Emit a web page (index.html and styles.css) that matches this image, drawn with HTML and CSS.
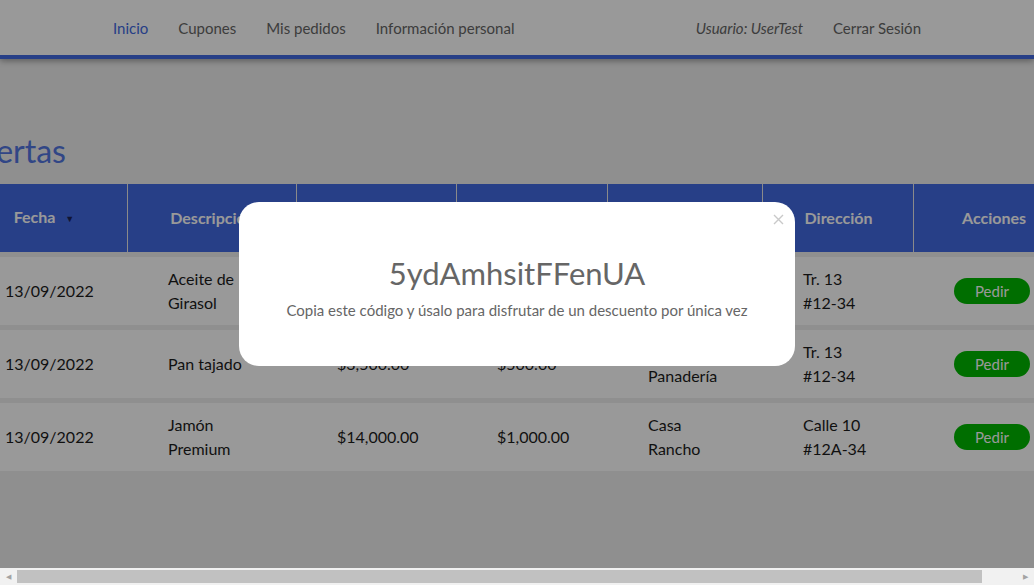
FILE: index.html
```html
<!DOCTYPE html>
<html lang="es">
<head>
    <meta charset="UTF-8">
    <meta name="viewport" content="width=device-width, initial-scale=1.0">
    <title>Ofertas</title>
    <link rel="stylesheet" href="styles.css">
</head>
<body>
    <nav class="navbar">
        <div class="nav-inner">
            <ul class="nav-links">
                <li><a href="#" class="active">Inicio</a></li>
                <li><a href="#">Cupones</a></li>
                <li><a href="#">Mis pedidos</a></li>
                <li><a href="#">Información personal</a></li>
            </ul>
            <ul class="nav-links">
                <li><span class="user">Usuario: UserTest</span></li>
                <li><a href="#">Cerrar Sesión</a></li>
            </ul>
        </div>
    </nav>

    <main class="page">
        <div class="content">
            <h1>Ofertas</h1>
            <table class="offers">
                <thead>
                    <tr>
                        <th class="col-date">Fecha <span class="sort">&#9660;</span></th>
                        <th class="col-desc">Descripción</th>
                        <th class="col-price">Precio</th>
                        <th class="col-ship">Costo de<br>envío</th>
                        <th class="col-prov">Proveedor</th>
                        <th class="col-addr">Dirección</th>
                        <th class="col-act">Acciones</th>
                    </tr>
                </thead>
                <tbody>
                    <tr>
                        <td>13/09/2022</td>
                        <td>Aceite de Girasol</td>
                        <td>$12,000.00</td>
                        <td>$1,500.00</td>
                        <td>Distribuidora Sol</td>
                        <td>Tr. 13 #12-34</td>
                        <td><button class="btn-order">Pedir</button></td>
                    </tr>
                    <tr>
                        <td>13/09/2022</td>
                        <td>Pan tajado</td>
                        <td>$3,500.00</td>
                        <td>$500.00</td>
                        <td>La Panadería</td>
                        <td>Tr. 13 #12-34</td>
                        <td><button class="btn-order">Pedir</button></td>
                    </tr>
                    <tr>
                        <td>13/09/2022</td>
                        <td>Jamón Premium</td>
                        <td>$14,000.00</td>
                        <td>$1,000.00</td>
                        <td>Casa Rancho</td>
                        <td>Calle 10 #12A-34</td>
                        <td><button class="btn-order">Pedir</button></td>
                    </tr>
                </tbody>
            </table>
        </div>
    </main>

    <div class="backdrop">
        <div class="modal">
            <button class="modal-close" aria-label="Cerrar">
                <svg width="11" height="11" viewBox="0 0 11 11">
                    <path d="M1 1 L10 10 M10 1 L1 10" stroke="#c9c9c9" stroke-width="1.4" fill="none"/>
                </svg>
            </button>
            <div class="coupon-code">5ydAmhsitFFenUA</div>
            <p class="coupon-text">Copia este código y úsalo para disfrutar de un descuento por única vez</p>
        </div>
    </div>

    <!-- horizontal scrollbar as seen in the capture -->
    <div class="hscroll">
        <span class="hscroll-arrow">&#9664;</span>
        <div class="hscroll-track"><div class="hscroll-thumb"></div></div>
        <span class="hscroll-arrow">&#9654;</span>
    </div>
</body>
</html>
```

FILE: styles.css
```css
body {
    margin: 0;
    font-family: 'Lato', 'Liberation Sans', sans-serif;
    background-color: #eeeeee;
    color: #1c1c1c;
}

.navbar {
    background-color: #fff;
    height: 55px;
    border-bottom: 4px solid #4169e1;
    box-shadow: 0 2px 6px rgba(0, 0, 0, 0.35);
}

.nav-inner {
    width: 808px;
    height: 100%;
    margin: 0 auto;
    display: flex;
    justify-content: space-between;
    align-items: center;
}

.nav-links {
    list-style: none;
    margin: 0;
    padding: 0;
    display: flex;
    gap: 30px;
    font-size: 15px;
}

.nav-links a {
    color: #666;
    text-decoration: none;
}

.nav-links a.active {
    color: #4169e1;
}

.user {
    color: #666;
    font-style: italic;
}

.page {
    display: flex;
    justify-content: center;
}

.content {
    flex: none;
    width: 1114px;
}

h1 {
    margin: 72px 0 13px;
    font-size: 32px;
    line-height: 40px;
    font-weight: normal;
    color: #5275e0;
}

.offers {
    width: 100%;
    table-layout: fixed;
    border-collapse: collapse;
    font-size: 16px;
}

.offers th {
    height: 68px;
    padding: 0;
    background-color: #4169e1;
    color: #fff;
    font-weight: bold;
    font-size: 16px;
    line-height: 22px;
    box-shadow: inset -1px 0 0 #e6e6e6;
}

.offers th:last-child {
    box-shadow: none;
}

.col-ship {
    padding-bottom: 4px;
}

.sort {
    font-size: 9px;
    color: #1b2356;
    margin-left: 6px;
    vertical-align: middle;
}

.offers td {
    height: 68px;
    padding: 0 45px 0 40px;
    border-top: 5px solid #eeeeee;
    background-color: #fff;
    line-height: 24px;
    text-align: left;
}

.offers td:first-child {
    padding-left: 45px;
    white-space: nowrap;
}

.col-date { width: 168px; }
.col-desc { width: 169px; }
.col-price { width: 160px; }
.col-ship { width: 151px; }
.col-prov { width: 155px; }
.col-addr { width: 151px; }
.col-act { width: 160px; }

.btn-order {
    width: 76px;
    height: 26px;
    border: none;
    border-radius: 13px;
    background-color: #00b800;
    color: #fff;
    font-family: inherit;
    font-size: 15px;
    cursor: pointer;
}

.backdrop {
    position: fixed;
    top: 0;
    left: 0;
    right: 0;
    bottom: 17px;
    background-color: rgba(0, 0, 0, 0.4);
    display: flex;
    align-items: center;
    justify-content: center;
}

.modal {
    position: relative;
    width: 556px;
    height: 164px;
    box-sizing: border-box;
    padding-top: 51px;
    background-color: #fff;
    border-radius: 20px;
    text-align: center;
}

.modal-close {
    position: absolute;
    top: 12px;
    right: 11px;
    padding: 0;
    border: none;
    background: none;
    line-height: 0;
    cursor: pointer;
}

.coupon-code {
    font-size: 31px;
    line-height: 40px;
    color: #666;
}

.coupon-text {
    margin: 8px 0 0;
    font-size: 15px;
    color: #666;
}

.hscroll {
    position: fixed;
    left: 0;
    right: 0;
    bottom: 0;
    height: 17px;
    background-color: #f1f1f1;
    display: flex;
    align-items: center;
}

.hscroll-arrow {
    width: 17px;
    font-size: 7px;
    color: #a3a3a3;
    text-align: center;
}

.hscroll-track {
    flex: 1;
    height: 13px;
}

.hscroll-thumb {
    width: 965px;
    height: 100%;
    background-color: #c1c1c1;
}
```
